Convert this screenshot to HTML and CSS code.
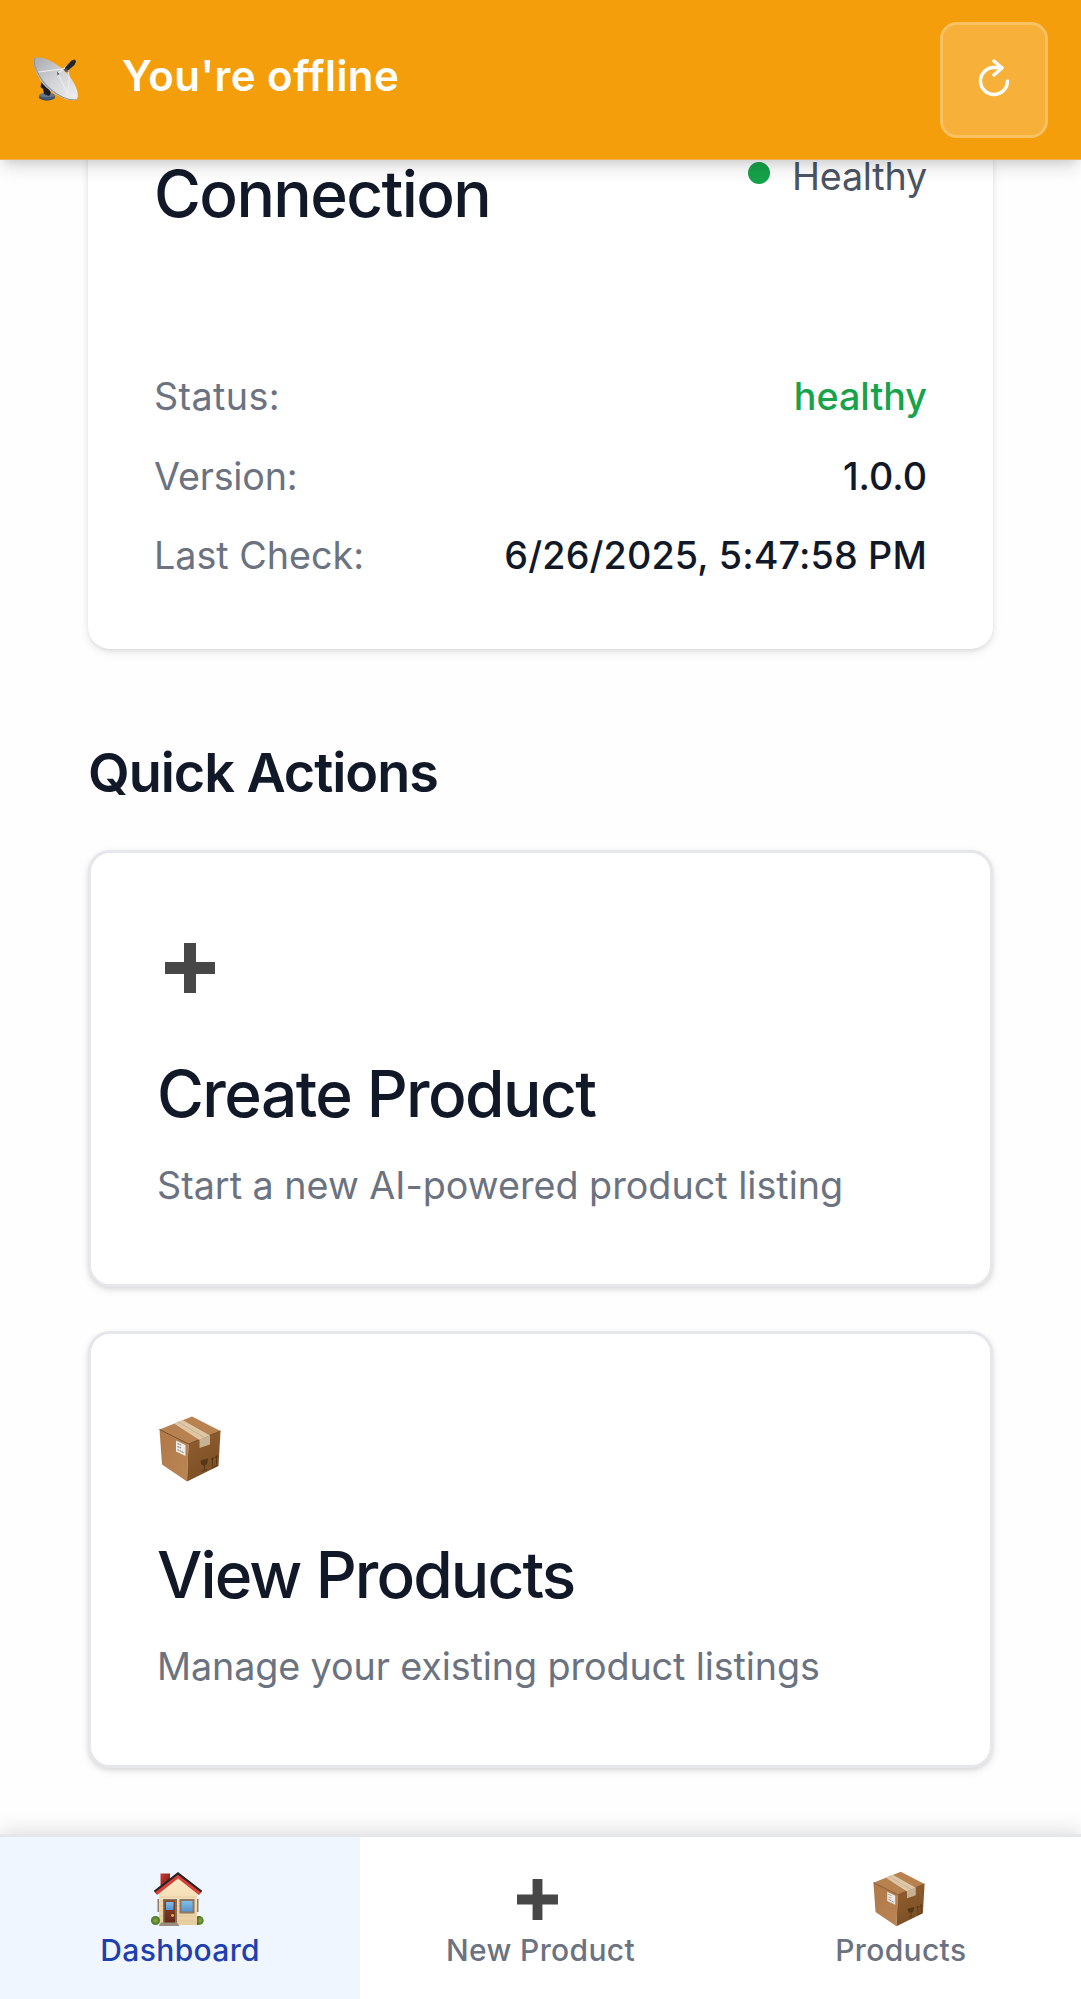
FILE: index.html
```html
<!DOCTYPE html>
<html lang="en">
<head>
<meta charset="utf-8">
<title>Dashboard</title>
<link rel="stylesheet" href="styles.css">
</head>
<body>
<svg class="defs" aria-hidden="true">
  <defs>
    <linearGradient id="box-left" x1="0" y1="0" x2="1" y2="1"><stop offset="0" stop-color="#b07846"/><stop offset="1" stop-color="#ba8555"/></linearGradient>
    <linearGradient id="box-right" x1="0" y1="0" x2="0.4" y2="1"><stop offset="0" stop-color="#935f30"/><stop offset="1" stop-color="#7b5025"/></linearGradient>
    <linearGradient id="dish" x1="0" y1="0" x2="1" y2="1"><stop offset="0" stop-color="#a9aaae"/><stop offset="0.5" stop-color="#d2d3d6"/><stop offset="1" stop-color="#f1f1f3"/></linearGradient>
    <linearGradient id="wall" x1="0" y1="0" x2="0" y2="1"><stop offset="0" stop-color="#ffebc8"/><stop offset="1" stop-color="#e6cd9f"/></linearGradient>
    <linearGradient id="glass" x1="0" y1="0" x2="0" y2="1"><stop offset="0" stop-color="#83bfe8"/><stop offset="1" stop-color="#5594cf"/></linearGradient>
    <linearGradient id="door" x1="0" y1="0" x2="0" y2="1"><stop offset="0" stop-color="#8a4327"/><stop offset="1" stop-color="#632a19"/></linearGradient>
    <linearGradient id="chimney" x1="0" y1="0" x2="1" y2="1"><stop offset="0" stop-color="#c93d35"/><stop offset="1" stop-color="#741510"/></linearGradient>
    <radialGradient id="bush"><stop offset="0" stop-color="#8aac46"/><stop offset="1" stop-color="#477321"/></radialGradient>
    <symbol id="package" viewBox="0 0 62 66">
      <path d="M.5 13.500 33 0.500 61.500 15 29.500 28z" fill="#b78150"/>
      <path d="M.5 13.500 29.500 28 28 65.500 3 48.500z" fill="url(#box-left)"/>
      <path d="M61.500 15 29.500 28 28 65.500 59.500 50z" fill="url(#box-right)"/>
      <path d="M.5 13.500 29.500 28 61.500 15" fill="none" stroke="#714622" stroke-width=".9"/>
      <path d="M15 7.500 23.500 4 51 19.500 40.500 24z" fill="#dec7a7"/>
      <path d="M19 6 45.500 21.500" stroke="#c9af8d" stroke-width="1"/>
      <path d="M40.500 23.700 51 19.300V28.500L40.500 32z" fill="#c6b194"/>
      <path d="M17 24.500 26.500 29V40L17 35.500z" fill="#eeeae6"/>
      <path d="M18.500 27.500 22 29M18.500 30.500 22 32M18.500 33.500 25 36.800" stroke="#888" stroke-width="1.200" stroke-dasharray="1.500 .7"/>
      <path d="M41.500 44.500 49 42.500Q49 49 45.300 49.500Q41.500 49.500 41.500 44.500z" fill="#553719"/>
      <path d="M45.300 49V54M42.500 55.500 48 53.500M52.500 52 58.500 49.500M53.500 50.500V41.500M57.500 48.500V40M52.300 44 53.500 41.500 54.800 43M56.300 42 57.500 39.500 58.500 41" fill="none" stroke="#553719" stroke-width="1"/>
    </symbol>
    <symbol id="plus" viewBox="0 0 50 50">
      <path d="M19 0H31V19H50V31H31V50H19V31H0V19H19z" fill="#474747"/>
    </symbol>
  </defs>
</svg>

<header class="banner">
  <svg class="banner-icon" viewBox="0 0 44 44">
    <ellipse cx="13" cy="40" rx="8.200" ry="3.700" fill="#41536d"/>
    <ellipse cx="13" cy="38.200" rx="7.800" ry="2.300" fill="#64768d"/>
    <path d="M8 23 13 28 17 36 15 39 10 37 9 32 6.500 30z" fill="#1c1d20"/>
    <path d="M1 1C8-1.500 24 6 34 17.500C42 27 46 38 42.500 42.500C37 46 19 38.500 9 27C1.500 17.500-2.500 4 1 1z" fill="url(#dish)"/>
    <path d="M1 1C-1.500 7 4 20 14 30C24 39.500 36 44.500 42.500 42.500" fill="none" stroke="#96979b" stroke-width="1.200"/>
    <path d="M4.500 15 32 11.500M23.500 17 34 8M33.500 11 35.500 22 33 39M24 16.500 34 38" fill="none" stroke="#ececee" stroke-width="1.100"/>
    <path d="M23 14.500 25.500 17 23.500 18.500z" fill="#55575b"/>
    <path d="M31 10.500 37.500 3.500 41 2.500 42 4.500 40.500 8 34 13.500 31 13z" fill="#24252a"/>
    <path d="M29.500 12 33 11.500 34.500 14.500 31.500 15z" fill="#515258"/>
  </svg>
  <div class="banner-title">You're offline</div>
  <button class="retry" aria-label="Retry">
    <svg class="retry-icon" viewBox="0 0 34 38"><path d="M30.500 22A13.500 13.500 0 1 1 17 8.500H25M17 2 25 9 17 16" fill="none" stroke="#fff" stroke-width="3.400" stroke-linecap="round" stroke-linejoin="round"/></svg>
  </button>
</header>

<main class="content">
  <section class="card">
    <div class="card-head">
      <h2 class="card-title">Connection</h2>
      <div class="health"><i class="dot"></i>Healthy</div>
    </div>
    <dl class="facts">
      <div class="fact"><dt class="status">Status:</dt><dd class="ok">healthy</dd></div>
      <div class="fact"><dt class="version">Version:</dt><dd>1.0.0</dd></div>
      <div class="fact"><dt>Last Check:</dt><dd class="time">6/26/2025, 5:47:58 PM</dd></div>
    </dl>
  </section>

  <h2 class="section-title">Quick Actions</h2>
  <div class="actions">
    <a class="action">
      <div class="action-icon"><svg class="plus-large"><use href="#plus"/></svg></div>
      <h3 class="card-title">Create Product</h3>
      <p class="action-text">Start a new AI-powered product listing</p>
    </a>
    <a class="action">
      <div class="action-icon"><svg class="package-large"><use href="#package"/></svg></div>
      <h3 class="card-title tight">View Products</h3>
      <p class="action-text tight">Manage your existing product listings</p>
    </a>
  </div>
</main>

<nav class="tabs">
  <a class="tab active">
    <svg class="tab-icon" viewBox="0 0 54 56">
      <path d="M9.500 2.500H19V18H9.500z" fill="url(#chimney)"/>
      <path d="M6.500 28H9V41H6.500zM45 28H47.500V41H45z" fill="#927b69"/>
      <path d="M8 21 27 5 46 21V54H8z" fill="url(#wall)"/>
      <path d="M9 26H45M9 30H45M9 35H45M9 40H45M9 45H45M9 50H45" stroke="#d9bf91" stroke-width=".5"/>
      <path d="M3 20.500 27 2 51 20.500 48 24 27 7.500 6 24z" fill="#d83f38"/>
      <path d="M3.500 20.500 27 2.300 50.500 20.500" fill="none" stroke="#272324" stroke-width="2.200"/>
      <path d="M12 28H26V52H12z" fill="#83705a"/><path d="M13.500 29.500H24V52H13.500z" fill="url(#door)"/>
      <path d="M15 31H22.500V39H15z" fill="url(#glass)"/><circle cx="21.500" cy="44.500" r="1.400" fill="#f2b646"/>
      <path d="M28.500 28H43.500V42.500H28.500z" fill="#8b7763"/><path d="M30.500 30H41.500V40.500H30.500z" fill="url(#glass)"/>
      <circle cx="4.500" cy="49.500" r="4.500" fill="url(#bush)"/><path d="M46 45.500C50 44 53 47 52.500 50.500Q52 54 46 54z" fill="url(#bush)"/>
      <path d="M10 51.500H26L28.500 55H8z" fill="#9b8e7f"/>
    </svg>
    <span>Dashboard</span>
  </a>
  <a class="tab"><svg class="tab-icon plus-small"><use href="#plus"/></svg><span>New Product</span></a>
  <a class="tab"><svg class="tab-icon package-small"><use href="#package"/></svg><span>Products</span></a>
</nav>
</body>
</html>
```
FILE: styles.css
```css
* { box-sizing: border-box; }
body {
  margin: 0;
  height: 1999px;
  overflow: hidden;
  display: flex;
  flex-direction: column;
  background: #fefefe;
  color: #111827;
  font-family: Inter, "Liberation Sans", sans-serif;
}
h2, h3, p, dl, dd { margin: 0; }
svg { display: block; flex: none; }
.defs { position: absolute; width: 0; height: 0; }

.banner {
  position: relative;
  z-index: 2;
  flex: none;
  height: 160px;
  padding: 0 33px;
  display: flex;
  align-items: center;
  background: #f59e0b;
  border-bottom: 1px solid #f0b14a;
  box-shadow: 0 11px 17px -3px rgba(0, 0, 0, .12), 0 5px 10px -4px rgba(0, 0, 0, .12);
}
.banner-icon { width: 44px; height: 44px; margin: 0 -1px 1px 1px; }
.banner-title {
  flex: 1;
  margin-left: 45px;
  padding-bottom: 8px;
  color: #fff;
  font-size: 42px;
  line-height: 60px;
  font-weight: 600;
  letter-spacing: .45px;
}
.retry {
  width: 108px;
  height: 116px;
  padding: 0 0 4px;
  display: flex;
  align-items: center;
  justify-content: center;
  background: rgba(255, 255, 255, .2);
  background-clip: padding-box;
  border: 3px solid rgba(255, 255, 255, .36);
  border-radius: 17px;
}
.retry-icon { width: 34px; height: 38px; }

.content { flex: 1; min-height: 0; padding: 0 88px; }
.card {
  height: 509px;
  margin-top: -20px;
  padding: 14px 66px 0;
  background: #fff;
  border-radius: 22px;
  box-shadow: 0 3px 8px rgba(0, 0, 0, .1), 0 2px 4px -1px rgba(0, 0, 0, .08);
}
.card-head {
  display: flex;
  justify-content: space-between;
  align-items: flex-start;
  height: 214px;
}
.card-title { font-size: 64px; line-height: 80px; font-weight: 500; letter-spacing: -1.6px; }
.card-title.tight { letter-spacing: -1.9px; }
.health {
  display: flex;
  align-items: center;
  gap: 22px;
  margin-top: -3px;
  color: #4b5563;
  font-size: 37.7px;
  line-height: 50px;
  letter-spacing: -.2px;
}
.dot { width: 22px; height: 22px; margin-bottom: 6px; border-radius: 50%; background: #16a34a; }
.facts { display: grid; gap: 22px; }
.fact {
  display: flex;
  justify-content: space-between;
  font-size: 37.7px;
  line-height: 57.5px;
}
.fact dt { color: #6b7280; }
.fact dd { font-weight: 500; }
.fact .status { letter-spacing: .4px; }
.fact .version { letter-spacing: -.2px; }
.fact .ok { color: #16a34a; }
.fact .time { letter-spacing: .15px; }

.section-title {
  margin: 91px 0 44px;
  font-size: 54px;
  line-height: 66px;
  font-weight: 600;
  letter-spacing: -1.05px;
}
.actions { display: grid; gap: 44px; }
.action {
  display: block;
  height: 437px;
  padding: 82px 66px 0;
  background: #fff;
  border: 3px solid #e5e7eb;
  border-radius: 22px;
  box-shadow: 0 3px 8px rgba(0, 0, 0, .09), 0 2px 4px rgba(0, 0, 0, .08);
}
.action-icon {
  display: flex;
  align-items: center;
  justify-content: center;
  width: 66px;
  height: 66px;
  margin-bottom: 53px;
}
.plus-large { width: 50px; height: 50px; }
.package-large { width: 62px; height: 66px; }
.action-text { margin-top: 22px; color: #6b7280; font-size: 37.7px; line-height: 58px; }
.action-text.tight { letter-spacing: -.1px; }

.tabs {
  position: relative;
  z-index: 2;
  flex: none;
  height: 165px;
  display: grid;
  grid-template-columns: repeat(3, 1fr);
  background: #fff;
  border-top: 3px solid #e5e7eb;
  box-shadow: 0 -6px 17px rgba(0, 0, 0, .1);
}
.tab {
  display: flex;
  flex-direction: column;
  align-items: center;
  padding-top: 34px;
  color: #6b7280;
  font-size: 30px;
  line-height: 42px;
  font-weight: 500;
  letter-spacing: .35px;
}
.tab.active { background: #eff6ff; color: #1e40af; }
.tab-icon { width: 54px; height: 56px; margin: 0 4px 2px 0; }
.plus-small { width: 41px; height: 41px; margin: 8px 5px 9px 0; }
.package-small { width: 52px; height: 56px; }
```
